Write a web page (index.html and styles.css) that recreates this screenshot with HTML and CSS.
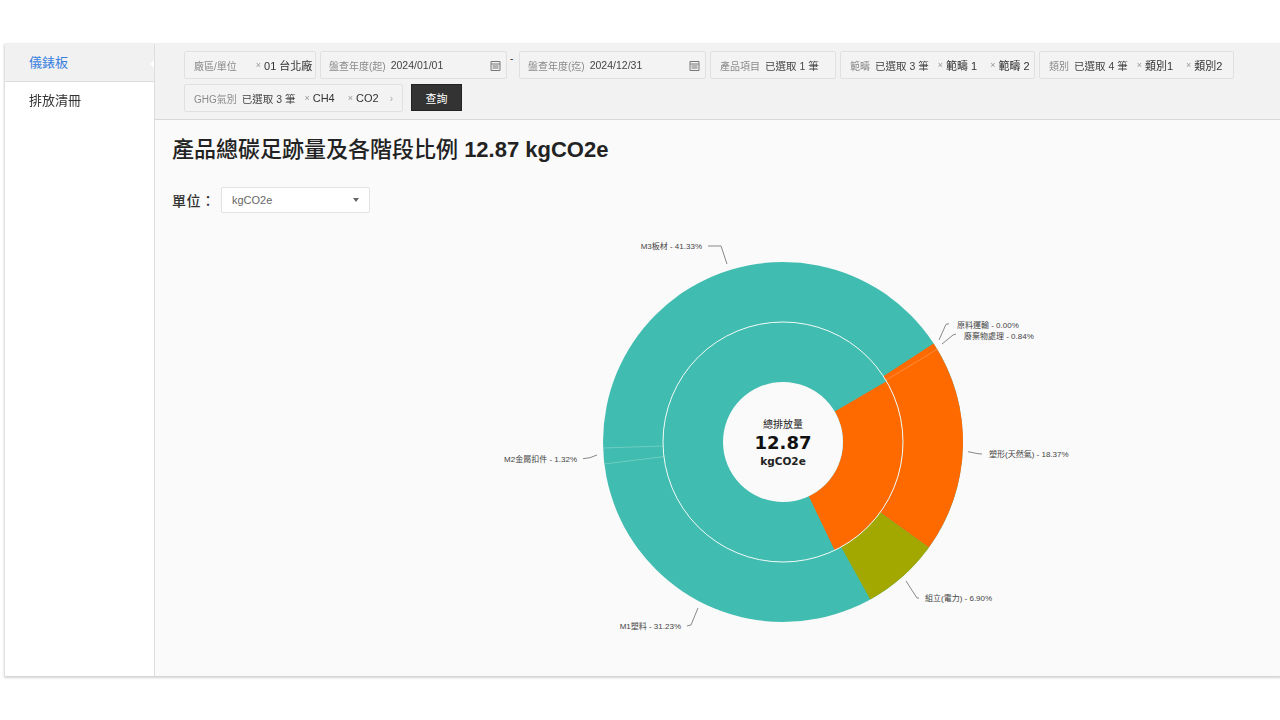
FILE: index.html
```html
<!DOCTYPE html>
<html lang="zh-Hant">
<head>
<meta charset="utf-8">
<title>儀錶板</title>
<link rel="stylesheet" href="styles.css">
</head>
<body>
<div class="app">
  <nav class="sidebar">
    <a class="nav-item active">儀錶板</a>
    <a class="nav-item">排放清冊</a>
  </nav>
  <div class="content">
    <header class="filters">
      <div class="chip w-site"><span class="lbl">廠區/單位</span><span class="tag"><i>×</i>01 台北廠</span></div>
      <div class="chip w-date"><span class="lbl">盤查年度(起)</span><span class="val">2024/01/01</span>
        <svg class="cal" viewBox="0 0 11 11"><path d="M1 1.5h9v9h-9zM1 4h9M2.5 6h6M2.5 8h6" fill="none" stroke="#777"/></svg></div>
      <span class="dash">-</span>
      <div class="chip w-date"><span class="lbl">盤查年度(迄)</span><span class="val">2024/12/31</span>
        <svg class="cal" viewBox="0 0 11 11"><path d="M1 1.5h9v9h-9zM1 4h9M2.5 6h6M2.5 8h6" fill="none" stroke="#777"/></svg></div>
      <div class="chip w-prod"><span class="lbl">產品項目</span><span class="val">已選取 1 筆</span></div>
      <div class="chip w-scope"><span class="lbl">範疇</span><span class="val">已選取 3 筆</span><span class="tag"><i>×</i>範疇 1</span><span class="tag"><i>×</i>範疇 2</span></div>
      <div class="chip w-cat"><span class="lbl">類別</span><span class="val">已選取 4 筆</span><span class="tag"><i>×</i>類別1</span><span class="tag"><i>×</i>類別2</span></div>
      <div class="chip w-ghg"><span class="lbl">GHG氣別</span><span class="val">已選取 3 筆</span><span class="tag"><i>×</i>CH4</span><span class="tag"><i>×</i>CO2</span><span class="more">›</span></div>
      <button class="query">查詢</button>
    </header>
    <main class="main">
      <h1 class="title">產品總碳足跡量及各階段比例 <b>12.87 kgCO2e</b></h1>
      <div class="unit">
        <label class="unit-label">單位：</label>
        <div class="select"><span>kgCO2e</span><span class="caret"></span></div>
      </div>
      <svg class="chart" viewBox="155 215 1125 460">
        <circle cx="783" cy="441" r="180" fill="#40bcb0"/>
        <path fill="#ff6a00" d="M933.6 342.4A180 180 0 0 1 928.8 546.6L880.2 511.4A120 120 0 0 0 883.4 375.3Z"/>
        <path fill="#a2a800" d="M928.8 546.6A180 180 0 0 1 870.3 598.4L841.2 545.9A120 120 0 0 0 880.2 511.4Z"/>
        <path class="seam-o" d="M885.9 379.2L937.3 348.3"/>
        <path class="seam-t" d="M663 445L603 447M663.9 455.6L604.3 463"/>
        <path fill="#ff6a00" d="M886.5 380.3A120 120 0 0 1 834.7 549.3L808.8 495.2A60 60 0 0 0 834.8 410.6Z"/>
        <circle class="ring" cx="783" cy="441" r="120"/>
        <circle cx="783" cy="441" r="60" fill="#fafafa"/>
        <text class="c-sm" x="783" y="427">總排放量</text>
        <text class="c-lg" x="783" y="448">12.87</text>
        <text class="c-md" x="783" y="464">kgCO2e</text>
        <path class="lead" d="M708 245H721L727 263"/>
        <path class="lead" d="M949 322.7L946 323.3L939 339"/>
        <path class="lead" d="M956 333L953 334L942 343"/>
        <path class="lead" d="M982 453L978 452.7L968 450.7"/>
        <path class="lead" d="M906 580L917 597H919"/>
        <path class="lead" d="M698 607L691 624L687 625"/>
        <path class="lead" d="M597 454L590 456.7L583 457.7"/>
        <text class="lab end" x="702" y="248">M3板材 - 41.33%</text>
        <text class="lab" x="957" y="327">原料運輸 - 0.00%</text>
        <text class="lab" x="964" y="338">廢棄物處理 - 0.84%</text>
        <text class="lab" x="989" y="456">塑形(天然氣) - 18.37%</text>
        <text class="lab" x="925" y="600">組立(電力) - 6.90%</text>
        <text class="lab end" x="681" y="628">M1塑料 - 31.23%</text>
        <text class="lab end" x="577" y="461">M2金屬扣件 - 1.32%</text>
      </svg>
    </main>
  </div>
</div>
</body>
</html>
```
FILE: styles.css
```css
* { box-sizing: border-box; }
html, body { margin: 0; height: 720px; background: #fff; overflow: hidden; }
body {
  padding: 44px 0 44px 5px;
  font-family: "Liberation Sans", "Noto Sans CJK TC", sans-serif;
  color: #333;
}
.app {
  display: flex;
  height: 632px;
  background: #fff;
  box-shadow: 0 1px 2px 1px #d4d4d4;
  filter: blur(0.35px);
}
.sidebar {
  width: 150px;
  flex: none;
  background: #fff;
  border-right: 1px solid #ddd;
  display: flex;
  flex-direction: column;
}
.nav-item {
  position: relative;
  height: 38px;
  padding-left: 24px;
  font-size: 13px;
  line-height: 38px;
  color: #333;
}
.nav-item.active {
  background: #f1f1f1;
  border-bottom: 1px solid #ddd;
  color: #3a80e0;
}
.nav-item.active::after {
  content: "";
  position: absolute;
  right: 0;
  top: 16px;
  border: 4px solid transparent;
  border-right-color: #fff;
  border-left-width: 0;
}
.content { flex: 1; min-width: 0; display: flex; flex-direction: column; }
.filters {
  height: 76px;
  flex: none;
  padding: 7px 0 0 29px;
  background: #f2f2f2;
  border-bottom: 1px solid #d8d8d8;
  display: flex;
  flex-wrap: wrap;
  align-content: flex-start;
  column-gap: 4px;
  row-gap: 5px;
}
.chip {
  height: 28px;
  display: flex;
  align-items: center;
  padding-left: 9px;
  background: #f3f3f3;
  border: 1px solid #e0e0e0;
  border-radius: 2px;
  overflow: hidden;
  white-space: nowrap;
  font-size: 11px;
  position: relative;
}
.w-site { width: 132px; }
.w-date { width: 187px; padding-left: 8px; }
.w-prod { width: 126px; }
.w-scope { width: 195px; }
.w-cat { width: 195px; }
.w-ghg { width: 219px; }
.w-site .lbl { margin-right: 10px; }
.lbl { font-size: 10px; color: #8a8a8a; margin-right: 5px; }
.val { font-size: 10.5px; color: #444; }
.tag { display: inline-flex; align-items: center; margin-left: 9px; font-size: 11px; color: #333; flex: none; }
.tag i { font-style: normal; font-size: 9px; color: #999; margin-right: 3px; }
.w-scope .tag + .tag, .w-cat .tag + .tag, .w-ghg .tag + .tag { margin-left: 13px; }
.more { margin-left: 11px; font-size: 10px; color: #aaa; }
.cal { width: 11px; height: 11px; margin-left: auto; margin-right: 5px; }
.dash { width: 6px; margin: 0 -1px; font-size: 10px; line-height: 16px; color: #333; }
.query {
  height: 27px;
  width: 51px;
  margin-left: 4px;
  background: #333;
  border: 1px solid #222;
  color: #fff;
  font: 11px "Liberation Sans", "Noto Sans CJK TC", sans-serif;
  padding: 0;
}
.main { flex: 1; min-height: 0; background: #fafafa; display: flex; flex-direction: column; }
.title {
  margin: 14px 0 0 17px;
  font-size: 22px;
  line-height: 32px;
  font-weight: 500;
  color: #222;
}
.title b { font-weight: 700; }
.unit { display: flex; align-items: center; margin: 21px 0 0 17px; height: 26px; }
.unit-label { width: 49px; font-size: 14px; font-weight: 500; color: #333; letter-spacing: 0.5px; }
.select {
  width: 149px;
  height: 26px;
  padding: 0 10px;
  display: flex;
  align-items: center;
  justify-content: space-between;
  background: #fff;
  border: 1px solid #e2e2e2;
  border-radius: 2px;
  font-size: 11px;
  color: #666;
}
.caret { border: 3.5px solid transparent; border-top: 4px solid #666; border-bottom-width: 0; }
.chart { display: block; width: 1125px; height: 460px; flex: none; margin-top: 3px; }
.ring { fill: none; stroke: #f4fbf8; stroke-width: 1; }
.seam-o { fill: none; stroke: #ff8a3c; stroke-width: 1; }
.seam-t { fill: none; stroke: #6fcdc2; stroke-width: 1; }
.lead { fill: none; stroke: #888; stroke-width: 1; }
.lab { font-size: 8px; fill: #444; }
.end { text-anchor: end; }
.c-sm, .c-lg, .c-md { text-anchor: middle; fill: #222; }
.c-sm { font-size: 10px; }
.c-lg { font-family: "DejaVu Sans", sans-serif; font-size: 18px; font-weight: 700; fill: #111; }
.c-md { font-family: "DejaVu Sans", sans-serif; font-size: 10.5px; font-weight: 700; }
```
